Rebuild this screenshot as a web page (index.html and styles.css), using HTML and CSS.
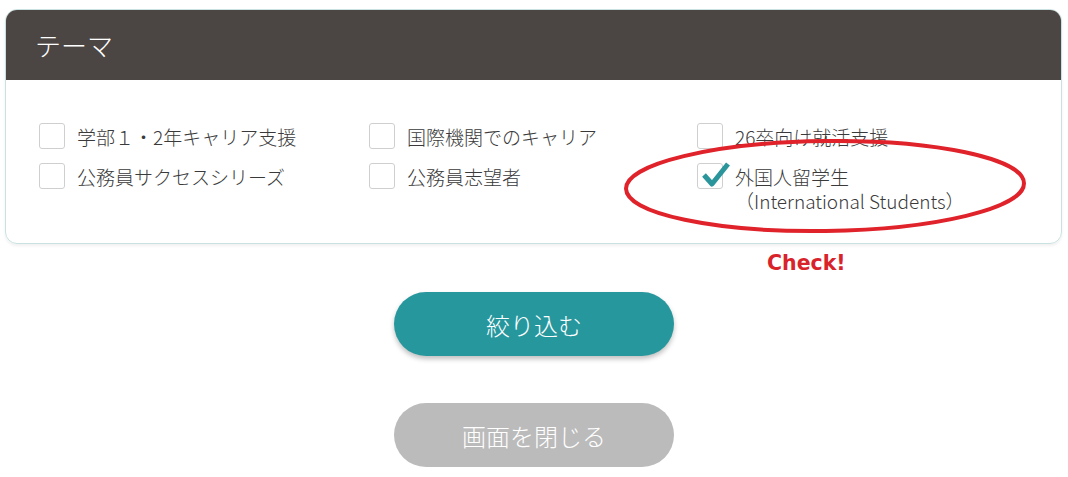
FILE: index.html
```html
<!DOCTYPE html>
<html lang="ja">
<head>
    <meta charset="UTF-8">
    <title>テーマ</title>
    <link rel="stylesheet" href="styles.css">
</head>
<body>
    <div class="card-wrap">
        <div class="card">
            <h2 class="card-header">テーマ</h2>
            <div class="theme-list">
                <label class="theme-item"><span class="box"></span><span class="theme-text">学部１・2年キャリア支援</span></label>
                <label class="theme-item"><span class="box"></span><span class="theme-text">国際機関でのキャリア</span></label>
                <label class="theme-item"><span class="box"></span><span class="theme-text">26卒向け就活支援</span></label>
                <label class="theme-item"><span class="box"></span><span class="theme-text">公務員サクセスシリーズ</span></label>
                <label class="theme-item"><span class="box"></span><span class="theme-text">公務員志望者</span></label>
                <label class="theme-item">
                    <span class="box checked">
                        <svg class="tick" width="34" height="26" viewBox="0 0 34 26">
                            <path d="M6 12 L14 21 L30 1" fill="none" stroke="#2a959b" stroke-width="5" stroke-linejoin="round" stroke-linecap="butt"/>
                        </svg>
                    </span>
                    <span class="theme-text">外国人留学生<br>（International Students）</span>
                </label>
            </div>
        </div>
        <svg class="circle-mark" width="412" height="104" viewBox="0 0 412 104">
            <ellipse cx="205" cy="50" rx="199" ry="45" fill="none" stroke="#e0222b" stroke-width="4" transform="rotate(-0.8 205 50)"/>
        </svg>
        <span class="check-note">Check!</span>
    </div>

    <div class="actions">
        <button class="btn btn-main">絞り込む</button>
        <button class="btn btn-close">画面を閉じる</button>
    </div>
</body>
</html>
```

FILE: styles.css
```css
* {
    margin: 0;
    padding: 0;
    box-sizing: border-box;
    font-family: 'Noto Sans CJK JP', sans-serif;
    font-weight: 300;
}
body {
    background: #fff;
    min-height: 100vh;
}
.card-wrap {
    position: relative;
    margin: 9px 6px 0 5px;
}
.card {
    border: 1px solid #c9e1e1;
    border-radius: 12px;
    overflow: hidden;
    box-shadow: 0 2px 3px rgba(0, 0, 0, 0.06);
}
.card-header {
    background: #4b4643;
    color: #fff;
    font-size: 26px;
    height: 71px;
    line-height: 71px;
    padding-left: 30px;
    margin: -1px -1px 0;
}
.theme-list {
    display: grid;
    grid-template-columns: 330px 328px 328px;
    row-gap: 14px;
    padding: 43px 0 30px 33px;
}
.theme-item {
    display: flex;
    align-items: flex-start;
    gap: 12px;
    color: #3a3a3a;
    font-size: 19px;
}
.box {
    position: relative;
    flex: none;
    width: 26px;
    height: 26px;
    border: 1px solid #cfcfcf;
    border-radius: 3px;
    background: #fff;
}
.tick {
    position: absolute;
    left: 0;
    top: -1px;
    overflow: visible;
}
.theme-text {
    line-height: 24px;
    padding-top: 2px;
}
.circle-mark {
    position: absolute;
    left: 615px;
    top: 127px;
}
.check-note {
    position: absolute;
    left: 762px;
    top: 242px;
    color: #d9232b;
    font-family: 'DejaVu Sans', sans-serif;
    font-weight: bold;
    font-size: 20.5px;
}
.actions {
    display: flex;
    flex-direction: column;
    align-items: center;
    gap: 47px;
    padding-top: 48px;
}
.btn {
    width: 280px;
    height: 64px;
    border: none;
    border-radius: 32px;
    color: #fff;
    font-size: 24px;
}
.btn-main {
    background: #27979e;
    box-shadow: 0 3px 5px rgba(0, 0, 0, 0.25);
}
.btn-close {
    background: #bbbbbb;
}
```
